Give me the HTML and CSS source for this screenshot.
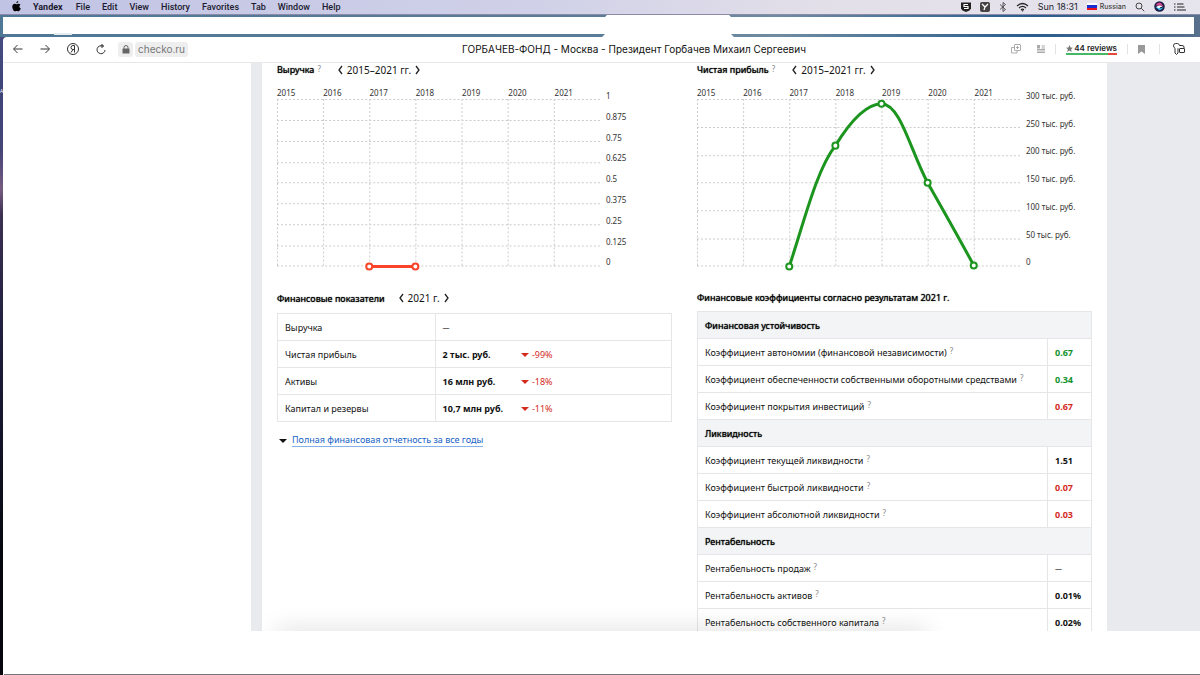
FILE: index.html
```html
<!DOCTYPE html>
<html lang="ru">
<head>
<meta charset="utf-8">
<meta name="viewport" content="width=device-width, initial-scale=1">
<title>ГОРБАЧЕВ-ФОНД - Москва - Президент Горбачев Михаил Сергеевич</title>
<link rel="stylesheet" href="styles.css">
</head>
<body>
<header class="menubar" lang="en">
  <nav class="menus">
    <button class="apple" aria-label="Apple"><svg width="9" height="11" viewBox="0 0 20 24"><path d="M14 0c.2 2.600-1.900 5-4.300 5C9.300 2.500 11.500.3 14 0zM18.700 8.200c-3.500 2.200-2.900 6.900.8 8.400-1 2.700-2.900 6.200-5 6.200-1.500 0-2-.9-3.900-.9s-2.500.9-3.900.9C3.800 22.800.6 17.200.6 12.600c0-4.200 2.700-6.600 5.500-6.600 1.700 0 3.100 1.100 4.200 1.100 1 0 2.700-1.200 4.800-1.200 1.400 0 2.800.8 3.600 2.300z"/></svg></button>
    <button class="menu app">Yandex</button>
    <button class="menu">File</button>
    <button class="menu">Edit</button>
    <button class="menu">View</button>
    <button class="menu">History</button>
    <button class="menu">Favorites</button>
    <button class="menu">Tab</button>
    <button class="menu">Window</button>
    <button class="menu">Help</button>
  </nav>
  <div class="status">
    <svg width="10" height="10" viewBox="0 0 20 20"><path d="M0 1h20v12l-3 4-7 3-7-3-3-4z" fill="#222"/><path d="M14 5H6v4h8v4H6" fill="none" stroke="#fff" stroke-width="2.400"/></svg>
    <svg width="10" height="10" viewBox="0 0 20 20"><rect width="20" height="20" rx="4" fill="#444"/><path d="M4 4l6 6 6-6M10 10l-2 6" fill="none" stroke="#fff" stroke-width="2.600"/></svg>
    <svg width="8" height="10" viewBox="0 0 16 20"><path d="M2 5l11 10-5 4V1l5 4L2 15" fill="none" stroke="#333" stroke-width="1.600"/></svg>
    <svg width="13" height="10" viewBox="0 0 26 20"><path d="M2 8q11-10 22 0M6 12q7-6.500 14 0M10 15.500q3-2.500 6 0" fill="none" stroke="#222" stroke-width="2.400"/><path d="M10.500 16.500h5L13 19.500z" fill="#222"/></svg>
    <time class="clock">Sun 18:31</time>
    <span class="lang"><svg width="10" height="7" viewBox="0 0 10 7"><path fill="#fff" d="M0 0h10v3H0z"/><path fill="#1a2fd0" d="M0 2h10v3H0z"/><path fill="#e8151b" d="M0 5h10v2H0z"/></svg>Russian</span>
    <button aria-label="Search"><svg width="10" height="10" viewBox="0 0 20 20" fill="none" stroke="#333" stroke-width="1.800"><circle cx="8" cy="8" r="6"/><path d="M12.500 12.500l6 6"/></svg></button>
    <button aria-label="Siri"><svg width="11" height="11" viewBox="0 0 22 22"><circle cx="11" cy="11" r="10.500" fill="#1c1b45"/><path d="M3 9q5-8 11-5l5 7-5-2z" fill="#d7438f"/><path d="M3 12q5-2 8 1t8-1q-4 8-9 6z" fill="#35b5e3"/><path d="M5 12q6-5 12-1-6 1-7 4z" fill="#fff"/></svg></button>
    <button aria-label="Notifications"><svg width="12" height="10" viewBox="0 0 24 20" fill="none" stroke="#222" stroke-width="2.400"><path d="M0 4h3M0 10h3M0 16h3M6 4h13M6 10h15M6 16h18"/></svg></button>
  </div>
</header>
<div class="tabstrip"><div class="tabs"></div><div class="tab"></div><div class="tabmark"></div></div>
<span class="desk-label">А</span>
<div class="window">
  <div class="toolbar">
    <div class="nav">
      <button aria-label="Back"><svg width="10" height="10" viewBox="0 0 20 20" class="line"><path d="M19 10H2M9 2l-8 8 8 8"/></svg></button>
      <button aria-label="Forward"><svg width="10" height="10" viewBox="0 0 20 20" class="line"><path d="M1 10h17M11 2l8 8-8 8"/></svg></button>
      <button aria-label="Yandex"><svg width="12" height="12" viewBox="0 0 24 24" class="line"><circle cx="12" cy="12" r="11"/><path d="M15 19V5h-3q-4 0-4 4t4 4h3M12 13l-4 6"/></svg></button>
      <button aria-label="Reload"><svg width="10" height="11" viewBox="0 0 20 22" class="line"><path d="M13 4A8 8 0 1 0 18 12M9 4h6M11 0l4 4-4 4"/></svg></button>
      <div class="address">
        <button class="lock" aria-label="Secure"><svg width="8" height="9" viewBox="0 0 16 18"><path d="M4 8V5a4 4 0 0 1 8 0v3" fill="none" stroke="#666" stroke-width="2"/><rect x="1" y="7" width="14" height="10" rx="1" fill="#666"/></svg></button>
        <button class="host">checko.ru</button>
      </div>
    </div>
    <div class="page-title">ГОРБАЧЕВ-ФОНД - Москва - Президент Горбачев Михаил Сергеевич</div>
    <div class="tools">
      <button class="translate" aria-label="Translate"><svg width="10" height="10" viewBox="0 0 20 20" fill="none" stroke="#999" stroke-width="1.600"><rect x="7" y="1" width="12" height="12" rx="1"/><path d="M7 7H1v11h11v-5M13 4v6M10 7h6"/></svg></button>
      <button aria-label="Reader"><svg width="8" height="8" viewBox="0 0 16 16" fill="none" stroke="#aaa" stroke-width="2"><path d="M0 9h16M0 12h16M0 15h16M9 2h7M9 6h7"/><path d="M0 0h6v7H0z" fill="#aaa" stroke="none"/></svg></button>
      <span class="sep"></span>
      <a class="reviews" href="#" lang="en"><svg width="7" height="7" viewBox="0 0 20 20"><path fill="#777" d="M10 0l3 7 7 .5-5.500 4.500 2 8L10 15.500 3.500 20l2-8L0 7.500 7 7z"/></svg>44 reviews</a>
      <span class="sep"></span>
      <button class="mark" aria-label="Bookmark"><svg width="7" height="9" viewBox="0 0 14 18"><path fill="#999" d="M0 0h14v18l-7-5-7 5z"/></svg></button>
      <span class="sep"></span>
      <button class="keys" aria-label="Passwords"><svg width="12" height="12" viewBox="0 0 24 24" fill="none" stroke="#333" stroke-width="2"><path d="M13 5Q12 1 9 1H5Q1 1 1 5.500 1 9 4 10.500V20l3 3 3-3V10.500"/><rect x="13" y="11" width="10" height="8" rx="1"/><path d="M13 5h5q4 0 4 3v3"/></svg></button>
    </div>
  </div>
  <main class="viewport">
    <div class="site">
      <div class="card">
        <section class="col">
          <div class="head"><h2>Выручка</h2><button class="help">?</button><div class="period"><button aria-label="Назад"><svg class="chev" width="5" height="8" viewBox="0 0 5 8"><path d="M4 0L1 4l3 4"/></svg></button><span>2015–2021 гг.</span><button aria-label="Вперёд"><svg class="chev" width="5" height="8" viewBox="0 0 5 8"><path d="M1 0l3 4-3 4"/></svg></button></div></div>
          <div class="chart">
            <div class="plot">
              <div class="years"><span>2015</span><span>2016</span><span>2017</span><span>2018</span><span>2019</span><span>2020</span><span>2021</span></div>
              <svg viewBox="0 0 323 170">
                <path class="grid" d="M0 .5h323M0 21.500h323M0 42.500h323M0 63.500h323M0 83.500h323M0 104.500h323M0 125.500h323M0 146.500h323M0 166.500h323M.5 0v167M46.500 0v167M92.500 0v167M138.500 0v167M184.500 0v167M230.500 0v167M276.500 0v167"/>
                <g class="series red"><path d="M92 167h46"/><circle cx="92" cy="167" r="3"/><circle cx="138" cy="167" r="3"/></g>
              </svg>
            </div>
            <div class="scale"><span>1</span><span>0.875</span><span>0.75</span><span>0.625</span><span>0.5</span><span>0.375</span><span>0.25</span><span>0.125</span><span>0</span></div>
          </div>
          <div class="head second"><h2>Финансовые показатели</h2><div class="period year"><button aria-label="Назад"><svg class="chev" width="5" height="8" viewBox="0 0 5 8"><path d="M4 0L1 4l3 4"/></svg></button><span>2021 г.</span><button aria-label="Вперёд"><svg class="chev" width="5" height="8" viewBox="0 0 5 8"><path d="M1 0l3 4-3 4"/></svg></button></div></div>
          <table class="figures">
            <tr><th>Выручка</th><td class="none">—</td><td></td></tr>
            <tr><th>Чистая прибыль</th><td class="value">2 тыс. руб.</td><td class="down">-99%</td></tr>
            <tr><th>Активы</th><td class="value">16 млн руб.</td><td class="down">-18%</td></tr>
            <tr><th>Капитал и резервы</th><td class="value">10,7 млн руб.</td><td class="down">-11%</td></tr>
          </table>
          <div class="more"><a href="#">Полная финансовая отчетность за все годы</a></div>
        </section>
        <section class="col">
          <div class="head"><h2>Чистая прибыль</h2><button class="help">?</button><div class="period"><button aria-label="Назад"><svg class="chev" width="5" height="8" viewBox="0 0 5 8"><path d="M4 0L1 4l3 4"/></svg></button><span>2015–2021 гг.</span><button aria-label="Вперёд"><svg class="chev" width="5" height="8" viewBox="0 0 5 8"><path d="M1 0l3 4-3 4"/></svg></button></div></div>
          <div class="chart">
            <div class="plot">
              <div class="years"><span>2015</span><span>2016</span><span>2017</span><span>2018</span><span>2019</span><span>2020</span><span>2021</span></div>
              <svg viewBox="0 0 323 170">
                <path class="grid" d="M0 .5h323M0 28.500h323M0 56.500h323M0 83.500h323M0 111.500h323M0 139.500h323M0 166.500h323M.5 0v167M46.500 0v167M92.500 0v167M138.500 0v167M184.500 0v167M230.500 0v167M276.500 0v167"/>
                <g class="series green"><path d="M92 167C107 122 119 71 138 46.500C153 22 169 5 184 4.700C203 5 213 52 230 83.500C245 110 261 138 276 166"/><circle cx="92" cy="167" r="3"/><circle cx="138" cy="46.500" r="3"/><circle cx="184" cy="4.700" r="3"/><circle cx="230" cy="83.500" r="3"/><circle cx="276" cy="166" r="3"/></g>
              </svg>
            </div>
            <div class="scale"><span>300 тыс. руб.</span><span>250 тыс. руб.</span><span>200 тыс. руб.</span><span>150 тыс. руб.</span><span>100 тыс. руб.</span><span>50 тыс. руб.</span><span>0</span></div>
          </div>
          <div class="head third"><h2>Финансовые коэффициенты согласно результатам 2021 г.</h2></div>
          <table class="ratios">
            <tr class="group"><th colspan="2">Финансовая устойчивость</th></tr>
            <tr><th>Коэффициент автономии (финансовой независимости)<button class="help">?</button></th><td class="good">0.67</td></tr>
            <tr><th>Коэффициент обеспеченности собственными оборотными средствами<button class="help">?</button></th><td class="good">0.34</td></tr>
            <tr><th>Коэффициент покрытия инвестиций<button class="help">?</button></th><td class="bad">0.67</td></tr>
            <tr class="group"><th colspan="2">Ликвидность</th></tr>
            <tr><th>Коэффициент текущей ликвидности<button class="help">?</button></th><td>1.51</td></tr>
            <tr><th>Коэффициент быстрой ликвидности<button class="help">?</button></th><td class="bad">0.07</td></tr>
            <tr><th>Коэффициент абсолютной ликвидности<button class="help">?</button></th><td class="bad">0.03</td></tr>
            <tr class="group"><th colspan="2">Рентабельность</th></tr>
            <tr><th>Рентабельность продаж<button class="help">?</button></th><td class="none">—</td></tr>
            <tr><th>Рентабельность активов<button class="help">?</button></th><td>0.01%</td></tr>
            <tr><th>Рентабельность собственного капитала<button class="help">?</button></th><td>0.02%</td></tr>
          </table>
        </section>
      </div>
    </div>
    <div class="dock-shade"></div>
  </main>
  <div class="below"></div>
</div>
</body>
</html>
```
FILE: styles.css
```css
* { box-sizing: border-box; }

body {
  margin: 0;
  height: 100vh;
  overflow: hidden;
  display: flex;
  flex-direction: column;
  position: relative;
  font-family: "Noto Sans", sans-serif;
  font-size: 9px;
  color: #111;
  background: linear-gradient(180deg, #4d5285 0, #3e4478 90px, #454577 150px, #765a80 190px, #3a3052 215px, #1d1d3c 350px, #06060e 560px, #08060c 100%);
}

button {
  display: flex;
  align-items: center;
  padding: 0;
  border: 0;
  background: none;
  font: inherit;
  color: inherit;
  cursor: pointer;
}

svg { display: block; flex: none; }

.menubar {
  flex: none;
  height: 14px;
  display: flex;
  justify-content: space-between;
  padding: 0 14px 1px 12px;
  font-family: Inter, sans-serif;
  font-size: 9px;
  font-weight: 500;
  color: #1c1b30;
  background: linear-gradient(90deg, #c1c3e4, #d0d1e8 45%, #e3dfe9 68%, #e6e4ec);
}

.menus, .status { display: flex; align-items: center; }
.menus { gap: 12px; font-family: Roboto, sans-serif; }
.app { font-weight: 700; margin-right: 1px; }
.status { gap: 9px; }
.clock { font-weight: 400; }
.lang { display: flex; align-items: center; gap: 3px; font-size: 7px; color: #444; }

.tabstrip {
  flex: none;
  height: 23px;
  position: relative;
  padding: 2px 6px 3px 3px;
  border-top: 1px solid #8b8aa8;
  background: linear-gradient(90deg, #4f7896, #5b7c97 50%, #6e8ba1 65%, #2a5c8c 86%, #58708c);
}
.tabs { height: 100%; background: #fff; }
.tab {
  position: absolute;
  left: 602px;
  top: 0;
  width: 132px;
  height: 22px;
  background: #fff;
  clip-path: polygon(5px 0, 127px 0, 129px 2px, 129px 19px, 132px 22px, 0 22px, 3px 19px, 3px 2px);
}
.tabmark {
  position: absolute;
  left: 54px;
  bottom: 2px;
  width: 18px;
  height: 2px;
  background: #e4ecef;
}
.desk-label {
  position: absolute;
  left: 0;
  top: 87px;
  font-size: 5px;
  line-height: 8px;
  color: #fff;
}

.window {
  flex: 1;
  min-height: 0;
  display: flex;
  flex-direction: column;
  position: relative;
  margin-left: 3px;
  background: #fff;
  border-top-left-radius: 4px;
}

.toolbar {
  flex: none;
  height: 26px;
  display: grid;
  grid-template-columns: 1fr auto 1fr;
  align-items: center;
  padding: 0 15px 1px 10px;
  border-bottom: 1px solid #e8e8ea;
  font-family: Inter, sans-serif;
}
.line { fill: none; stroke: #333; stroke-width: 2; }
.nav { display: flex; align-items: center; gap: 17px; }
.address { display: flex; gap: 2px; margin-left: -5px; }
.lock, .host { height: 15px; border-radius: 3px; background: #eee; color: #777; }
.lock { width: 15px; justify-content: center; }
.host { padding: 0 3px; font-size: 10px; }
.page-title { font-size: 10px; color: #111; margin-left: 70px; }
.tools { display: flex; align-items: center; justify-content: flex-end; }
.translate { margin-right: 16px; }
.sep { width: 1px; height: 10px; margin: 0 10px; background: #e2e2e4; }
.mark { margin-right: 4px; }
.keys { margin-left: 3px; }
.reviews {
  display: flex;
  align-items: center;
  gap: 1px;
  font-size: 8px;
  font-weight: 600;
  color: #222;
  text-decoration: none;
  border-bottom: 2px solid;
  border-image: linear-gradient(90deg, #46b865 82%, #e5483c 82%) 1;
}

.viewport {
  flex: 1;
  min-height: 0;
  overflow: hidden;
  position: relative;
}
.site {
  margin-left: 248px;
  padding: 0 93px 0 11px;
  background: #e8eaee;
}
.card {
  display: grid;
  grid-template-columns: 1fr 1fr;
  gap: 25px;
  padding: 0 15px;
  background: #fff;
}
.col { min-width: 0; padding-bottom: 40px; }

.head { display: flex; align-items: center; height: 13px; }
.head h2, .group th {
  margin: 0;
  font-size: 9px;
  font-weight: 400;
  color: #000;
  text-shadow: 0 0 1px #000;
  white-space: nowrap;
}
.head.second { margin-top: 21px; height: 16px; margin-bottom: 7px; }
.head.third { margin-top: 20px; height: 16px; margin-bottom: 6px; }
.period { display: flex; align-items: center; gap: 4px; margin-left: 17px; font-size: 10px; white-space: nowrap; }
.period.year { margin-left: 14px; }
.chev { fill: none; stroke: #222; stroke-width: 1.3; overflow: visible; }
.help {
  display: inline-block;
  margin-left: 3px;
  font-size: 8px;
  line-height: 8px;
  vertical-align: 2px;
  color: #888;
}
.head .help { align-self: flex-start; margin-top: 2px; }

.chart { display: flex; margin-top: 10px; }
.plot { flex: 0 0 82%; }
.plot svg { width: 100%; height: auto; overflow: visible; }
.years {
  display: grid;
  grid-template-columns: repeat(7, 1fr);
  height: 13px;
  line-height: 13px;
  font-size: 8px;
  color: #333;
}
.scale {
  display: flex;
  flex-direction: column;
  justify-content: space-between;
  padding: 4px 0 1px 5px;
  line-height: 12px;
  font-size: 8px;
  color: #333;
  white-space: nowrap;
}
.grid { fill: none; stroke: #ccc; stroke-dasharray: 2 2; }
.series { fill: #fff; stroke-width: 2; }
.series path { fill: none; stroke-width: 3; }
.red { stroke: #fa4328; }
.green { stroke: #1c951f; }

table { width: 100%; border-collapse: collapse; border: 1px solid #e6e6e8; }
tr { border-bottom: 1px solid #e6e6e8; }
th, td { height: 27px; padding: 0 7px; text-align: left; font-weight: 400; line-height: 13px; white-space: nowrap; }
.figures th { width: 40%; border-right: 1px solid #e6e6e8; }
.figures td { width: 20%; }
.figures .value { font-weight: 700; }
.figures .down { width: 40%; color: #d42a1e; }
.down::before {
  content: "";
  display: inline-block;
  margin-right: 3px;
  vertical-align: 1px;
  border: 4px solid transparent;
  border-top-color: #d42a1e;
  border-bottom: 0;
}
.ratios td { width: 44px; border-left: 1px solid #e6e6e8; font-weight: 700; }
.ratios .group th { background: #f3f4f6; }
.ratios .good { color: #11912b; }
.ratios .bad { color: #d42a1e; }
.figures .none, .ratios .none { font-weight: 400; font-size: 7px; }

.more { display: flex; align-items: center; gap: 5px; margin-top: 12px; padding-left: 2px; }
.more::before { content: ""; border: 4px solid transparent; border-top-color: #111; border-bottom: 0; }
.more a { color: #1763c6; text-decoration: none; line-height: 12px; border-bottom: 1px solid #84b2ea; }

.dock-shade {
  position: absolute;
  left: 273px;
  right: 273px;
  bottom: -12px;
  height: 12px;
  box-shadow: 0 0 24px rgba(0, 0, 0, 0.18);
  pointer-events: none;
}
.below {
  flex: none;
  height: 44px;
  margin-left: 1px;
  border-bottom: 1px solid #77727c;
  background: #fff;
}
```
